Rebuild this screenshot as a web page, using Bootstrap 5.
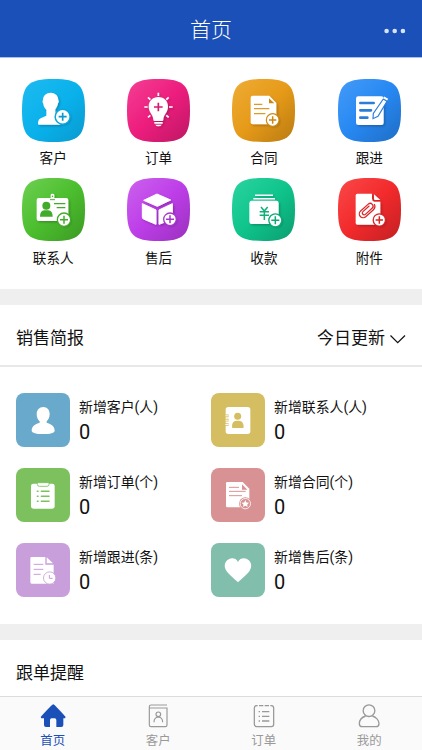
<!DOCTYPE html>
<html lang="zh-CN">
<head>
<meta charset="utf-8">
<meta name="viewport" content="width=device-width, initial-scale=1">
<title>首页</title>
<link rel="stylesheet" href="https://cdn.jsdelivr.net/npm/bootstrap@5.3.0/dist/css/bootstrap.min.css">
<style>
body{font-family:Roboto,"Noto Sans CJK SC",sans-serif;color:#111;background:#fff;height:750px;overflow:hidden}
svg{display:block;flex:none}
.topbar{height:57px;background:#1b50b8;box-shadow:0 1px 0 #a9bfe8;padding:3px 16px 0}
.topbar-title{font-size:21px;line-height:30px;font-weight:300}
.topbar-more{margin-top:1px}
.apps{height:232px;padding:21.5px 0 0 .5px}
.app-entry{height:99.5px}
.tile{width:63px;height:63px}
.app-label{font-size:13.6px;line-height:20px;margin-top:6.5px}
.band{height:16px;background:#efefef}
.section-head{height:62px;padding:8px 16px 0;border-bottom:2px solid #e8e8e8;font-size:17px}
.stats{height:257px;padding:26px 0 0 16px}
.stat{height:75px;width:195px;gap:9px}
.stat-icon{width:54px;height:54px;border-radius:8px}
.stat-name{font-size:13.9px;line-height:20px;padding-top:4px}
.stat-value{font-size:20px;line-height:24px;padding-top:3px}
.reminder{height:56px;padding:11px 16px 0;font-size:17px;line-height:45px}
.tabs{height:54px;background:#fafafa;border-top:1px solid #dcdcdc;color:#9b9b9b}
.tabs a{font-size:12.4px;line-height:18px;color:#999}
.tabs a.active{color:#1b50b8}
.tabs svg{width:30px;height:26px;margin:6px 0 3px}
</style>
<script src="https://cdn.jsdelivr.net/npm/bootstrap@5.3.0/dist/js/bootstrap.bundle.min.js"></script>
</head>
<body class="d-flex flex-column">
<svg width="0" height="0" class="position-absolute" aria-hidden="true">
<defs>
<path id="sq" d="M94.500 0C171 0 189 18 189 94.500C189 171 171 189 94.500 189C18 189 0 171 0 94.500C0 18 18 0 94.500 0Z"/>
<linearGradient id="g1" x2="1" y2="1"><stop offset="0" stop-color="#1dbbf1"/><stop offset=".55" stop-color="#09b0ea"/><stop offset="1" stop-color="#0999cf"/></linearGradient>
<linearGradient id="g2" x2="1" y2="1"><stop offset="0" stop-color="#f43f94"/><stop offset=".5" stop-color="#ed1d7d"/><stop offset="1" stop-color="#bd1764"/></linearGradient>
<linearGradient id="g3" x2="1" y2="1"><stop offset="0" stop-color="#eeac36"/><stop offset=".5" stop-color="#e69a18"/><stop offset="1" stop-color="#b97b12"/></linearGradient>
<linearGradient id="g4" x2="1" y2="1"><stop offset="0" stop-color="#449bf8"/><stop offset=".5" stop-color="#2788f2"/><stop offset="1" stop-color="#1f6dc4"/></linearGradient>
<linearGradient id="g5" x2="1" y2="1"><stop offset="0" stop-color="#6ed052"/><stop offset=".5" stop-color="#4cbe2e"/><stop offset="1" stop-color="#3b9a24"/></linearGradient>
<linearGradient id="g6" x2="1" y2="1"><stop offset="0" stop-color="#cc62ee"/><stop offset=".5" stop-color="#bd3ee8"/><stop offset="1" stop-color="#9a30bd"/></linearGradient>
<linearGradient id="g7" x2="1" y2="1"><stop offset="0" stop-color="#2bd3a0"/><stop offset=".5" stop-color="#0fc48b"/><stop offset="1" stop-color="#0b9d70"/></linearGradient>
<linearGradient id="g8" x2="1" y2="1"><stop offset="0" stop-color="#fb4848"/><stop offset=".5" stop-color="#f22a2c"/><stop offset="1" stop-color="#c22023"/></linearGradient>
<filter id="sh" x="-20%" y="-20%" width="150%" height="150%"><feDropShadow dx="4" dy="4" stdDeviation="2.500" flood-color="#000" flood-opacity=".24"/></filter>
</defs>
</svg>

<header class="topbar d-flex align-items-center justify-content-center text-white position-relative flex-shrink-0">
  <div class="topbar-title">首页</div>
  <svg class="topbar-more position-absolute end-0 me-3" width="22" height="6" viewBox="0 0 22 6" fill="#d6e4fb"><circle cx="2.600" cy="3" r="2.300"/><circle cx="10.700" cy="3" r="2.300"/><circle cx="18.900" cy="3" r="2.300"/></svg>
</header>

<section class="apps row g-0 align-content-start flex-shrink-0">
  <div class="app-entry col-3 d-flex flex-column align-items-center">
    <svg class="tile" viewBox="35 25 189 189"><use href="#sq" x="35" y="25" fill="url(#g1)"/>
      <g filter="url(#sh)"><path fill="#fff" d="M121 66C134 66 144 75 144 88C146 91 146 95 143 98C142 106 138 112 135 116V125L150 133V162H85Q82 161 83 157C84 149 86 145 91 143L108 135V117C103 112 99 106 99 99C96 96 96 91 98 88C98 75 108 66 121 66Z"/><circle cx="157" cy="138" r="21" fill="#fff"/></g>
      <circle cx="157" cy="138" r="22.500" fill="#fff" stroke="#09a6df" stroke-width="4.500"/><path d="M145 138H169M157 126V150" stroke="#0999d0" stroke-width="5"/></svg>
    <div class="app-label">客户</div>
  </div>
  <div class="app-entry col-3 d-flex flex-column align-items-center">
    <svg class="tile" viewBox="351 25 189 189"><use href="#sq" x="351" y="25" fill="url(#g2)"/>
      <g filter="url(#sh)" fill="#fff"><path d="M445 79C462 79 474 91 474 107C474 127 461 130 460 147Q460 151 456 151H434Q430 151 430 147C429 130 416 127 416 107C416 91 428 79 445 79Z"/><path d="M433 154H458V159H433ZM436 162H455Q453 167 445 167Q438 167 436 162Z"/><path d="M445 66V76M403 109H413M477 109H488M414 80L421 87M476 80L469 87M414 140L421 134M476 140L469 134" stroke="#fff" stroke-width="5"/></g>
      <path d="M432 109H458M445 96V122" stroke="#d51b70" stroke-width="5"/></svg>
    <div class="app-label">订单</div>
  </div>
  <div class="app-entry col-3 d-flex flex-column align-items-center">
    <svg class="tile" viewBox="62 25 189 189"><use href="#sq" x="62" y="25" fill="url(#g3)"/>
      <g filter="url(#sh)" fill="#fff"><path d="M124 75H174L195 97V161H124Q118 161 118 155V81Q118 75 124 75Z"/><circle cx="184" cy="148" r="18"/></g>
      <path d="M173 83V98H189Z" fill="#ca8816"/><path d="M128 101H153M128 114H174M128 129H162" stroke="#de9a24" stroke-width="4"/>
      <circle cx="184" cy="148" r="19" fill="#fff" stroke="#cf8b16" stroke-width="3.500"/><path d="M173 148H195M184 137V159" stroke="#cb8715" stroke-width="4.500"/></svg>
    <div class="app-label">合同</div>
  </div>
  <div class="app-entry col-3 d-flex flex-column align-items-center">
    <svg class="tile" viewBox="379 25 189 189"><use href="#sq" x="379" y="25" fill="url(#g4)"/>
      <g filter="url(#sh)"><rect x="433" y="77" width="83" height="86" rx="7" fill="#fff"/></g>
      <path d="M446 97H486M446 119H478M446 141H467" stroke="#2b7ed8" stroke-width="8" stroke-linecap="round"/>
      <path d="M515 85L526 92L499 137L484 144L485 128Z" fill="#fff" stroke="#287edb" stroke-width="3.500"/><path d="M516 80L528 87" stroke="#fff" stroke-width="6"/></svg>
    <div class="app-label">跟进</div>
  </div>
  <div class="app-entry col-3 d-flex flex-column align-items-center">
    <svg class="tile" viewBox="35 24 189 189"><use href="#sq" x="35" y="24" fill="url(#g5)"/>
      <g filter="url(#sh)"><rect x="79" y="84" width="95" height="69" rx="6" fill="#fff"/><path d="M121 88V75Q121 71 126 71Q132 71 132 75V88Z" fill="#fff"/><circle cx="161" cy="149" r="18" fill="#fff"/></g>
      <circle cx="126.500" cy="79" r="2.500" fill="#4aae30"/><path d="M119 89H134" stroke="#50b635" stroke-width="3"/><circle cx="108" cy="107" r="12" fill="#42ab2a"/><path d="M89 140Q89 122 102 121H114Q127 122 127 140Z" fill="#42ab2a"/><path d="M131 101H165M139 113H165" stroke="#42ab2a" stroke-width="4"/>
      <circle cx="161" cy="149" r="20" fill="#fff" stroke="#43aa2a" stroke-width="4"/><path d="M149 149H173M161 137V161" stroke="#43aa2a" stroke-width="4.500"/></svg>
    <div class="app-label">联系人</div>
  </div>
  <div class="app-entry col-3 d-flex flex-column align-items-center">
    <svg class="tile" viewBox="351 24 189 189"><use href="#sq" x="351" y="24" fill="url(#g6)"/>
      <g filter="url(#sh)" fill="#fff" stroke="#fff" stroke-width="3" stroke-linejoin="round"><path d="M441 72L482 90L442 109L401 91Z"/><path d="M397 101L438 120V163L400 147Q397 145 397 141Z"/><path d="M447 120L487 101V148L447 163Z"/><circle cx="480" cy="148" r="16"/></g>
      <circle cx="480" cy="148" r="19" fill="#fff" stroke="#a936cc" stroke-width="4"/><path d="M468 148H492M480 136V160" stroke="#a936cc" stroke-width="4.500"/></svg>
    <div class="app-label">售后</div>
  </div>
  <div class="app-entry col-3 d-flex flex-column align-items-center">
    <svg class="tile" viewBox="62 24 189 189"><use href="#sq" x="62" y="24" fill="url(#g7)"/>
      <g filter="url(#sh)" fill="#fff"><path d="M131 76H185M126 86H191" stroke="#fff" stroke-width="4.500"/><rect x="114" y="92" width="88" height="70" rx="7"/><circle cx="192" cy="151" r="18"/></g>
      <path d="M149 111L159 123L169 111M159 123V150M145 125H173M145 136H173" stroke="#0faf7c" stroke-width="4.500" fill="none"/>
      <circle cx="192" cy="151" r="19.500" fill="#fff" stroke="#0caa78" stroke-width="4"/><path d="M180 151H204M192 139V163" stroke="#0caa78" stroke-width="4.500"/></svg>
    <div class="app-label">收款</div>
  </div>
  <div class="app-entry col-3 d-flex flex-column align-items-center">
    <svg class="tile" viewBox="379 24 189 189"><use href="#sq" x="379" y="24" fill="url(#g8)"/>
      <g filter="url(#sh)" fill="#fff"><path d="M437 71H481V86Q481 94 488 95H506V164H437Q432 164 432 159V76Q432 71 437 71Z"/><path d="M487 73L506 90H491Q487 90 487 86Z"/><circle cx="503" cy="150" r="17"/></g>
      <g transform="rotate(-42 466 122)" fill="none" stroke="#db2729" stroke-width="3.800" stroke-linecap="round"><path d="M481 133H451A11.500 11.500 0 0 1 451 110H482A8.500 8.500 0 0 1 482 127H455A5.500 5.500 0 0 1 455 116H480M481 133Q493 132 495 123"/></g>
      <circle cx="503" cy="150" r="18.500" fill="#fff" stroke="#d72528" stroke-width="4"/><path d="M492 150H514M503 139V161" stroke="#d72528" stroke-width="4.500"/></svg>
    <div class="app-label">附件</div>
  </div>
</section>

<div class="band flex-shrink-0"></div>

<section class="flex-shrink-0">
  <div class="section-head d-flex align-items-center justify-content-between">
    <span>销售简报</span>
    <span class="d-flex align-items-center">今日更新<svg class="ms-1" width="17" height="12" viewBox="0 0 17 12" fill="none" stroke="#111" stroke-width="1.200"><path d="M1.500 2.500L8.700 9.700L16 2.500"/></svg></span>
  </div>
  <div class="stats d-flex flex-wrap align-content-start">
    <div class="stat d-flex">
      <svg class="stat-icon" viewBox="48 24 162 162"><rect x="48" y="24" width="162" height="162" fill="#69a9cb"/><path fill="#fff" d="M130 66C142 66 149 75 149 87C149 97 145 104 140 109V113C151 116 164 122 164 137C164 144 150 147 130 147S95 144 95 137C95 122 108 116 119 113V109C113 104 110 97 110 87C110 75 118 66 130 66Z"/></svg>
      <div><div class="stat-name">新增客户(人)</div><div class="stat-value">0</div></div>
    </div>
    <div class="stat d-flex">
      <svg class="stat-icon" viewBox="34 24 162 162"><rect x="34" y="24" width="162" height="162" fill="#d5be61"/><rect x="78" y="66" width="74" height="81" rx="8" fill="#fff"/><path d="M74 92.500H87M74 105.500H87M74 118.500H87" stroke="#d5be61" stroke-width="8"/><path d="M77 92.500H87M77 105.500H87M77 118.500H87" stroke="#fff" stroke-width="3"/><circle cx="114" cy="94" r="10.500" fill="#d5be61"/><path d="M97 126Q97 107 110 107H118Q132 108 132 126Q132 129 129 129H100Q97 129 97 126Z" fill="#d5be61"/></svg>
      <div><div class="stat-name">新增联系人(人)</div><div class="stat-value">0</div></div>
    </div>
    <div class="stat d-flex">
      <svg class="stat-icon" viewBox="48 250 162 162"><rect x="48" y="250" width="162" height="162" fill="#7dc15f"/><rect x="93" y="297" width="71" height="75" rx="7" fill="#fff"/><path d="M112 294H147V299Q147 305 141 305H118Q112 305 112 299Z" fill="#fff" stroke="#7dc15f" stroke-width="2.500"/><path d="M124 320H147M124 335H147M124 350H147M112 320H114M112 335H114M112 350H114" stroke="#7dc15f" stroke-width="4.500" stroke-linecap="round"/></svg>
      <div><div class="stat-name">新增订单(个)</div><div class="stat-value">0</div></div>
    </div>
    <div class="stat d-flex">
      <svg class="stat-icon" viewBox="34 250 162 162"><rect x="34" y="250" width="162" height="162" fill="#d99293"/><path fill="#fff" d="M83 292H129L149 312V368H83Q79 368 79 364V296Q79 292 83 292Z"/><path d="M127 299V315H143Z" fill="#d99293"/><path d="M88 308H118M88 320H138M88 333H127" stroke="#d99293" stroke-width="3"/><circle cx="137" cy="357" r="19" fill="#d99293"/><circle cx="137" cy="357" r="15.500" fill="#d99293" stroke="#fff" stroke-width="2.500"/><path fill="#fff" d="M137 346L140.300 353.500L148 354.500L142.500 360L144 367L137 363.500L130 367L131.500 360L126 354.500L133.700 353.500Z"/></svg>
      <div><div class="stat-name">新增合同(个)</div><div class="stat-value">0</div></div>
    </div>
    <div class="stat d-flex">
      <svg class="stat-icon" viewBox="48 40 162 162"><rect x="48" y="40" width="162" height="162" fill="#c89edb"/><path fill="#fff" d="M95 82H136V105H161V162H95Q91 162 91 158V86Q91 82 95 82ZM140 83L159 101H140Z"/><path d="M101 104H130M101 119H130M101 134H122" stroke="#c89edb" stroke-width="3"/><circle cx="149" cy="145" r="18.500" fill="#fff" stroke="#c89edb" stroke-width="2.500"/><path d="M148 136V146H158" stroke="#c89edb" stroke-width="3" fill="none"/></svg>
      <div><div class="stat-name">新增跟进(条)</div><div class="stat-value">0</div></div>
    </div>
    <div class="stat d-flex">
      <svg class="stat-icon" viewBox="633 40 162 162"><rect x="633" y="40" width="162" height="162" fill="#81bfac"/><path fill="#fff" d="M714 97C720 84 734 84 742 89C755 97 757 111 749 123C741 135 724 148 714 158C704 148 687 135 679 123C671 111 673 97 686 89C694 84 708 84 714 97Z"/></svg>
      <div><div class="stat-name">新增售后(条)</div><div class="stat-value">0</div></div>
    </div>
  </div>
</section>

<div class="band flex-shrink-0"></div>
<section class="reminder flex-shrink-0">跟单提醒</section>

<nav class="tabs d-flex flex-shrink-0">
  <a class="active col-3 d-flex flex-column align-items-center text-decoration-none" href="#"><svg viewBox="114 190 90 78"><path fill="#1b50b8" d="M160 194Q163 194 197 232L195 236H190V256Q190 262 184 262H169V241Q169 236 164 236H155Q150 236 150 241V262H138Q132 262 132 256V236H124L122 232Q156 194 160 194Z"/></svg>首页</a>
  <a class="col-3 d-flex flex-column align-items-center text-decoration-none" href="#"><svg viewBox="430 190 90 78" fill="none" stroke="#999" stroke-width="3.500"><path d="M502 196H454Q449 196 449 201V256Q449 261 454 261H497Q502 261 502 256V205H450"/><circle cx="476" cy="224" r="7"/><path d="M463 248Q463 233 476 232Q489 233 489 248"/></svg>客户</a>
  <a class="col-3 d-flex flex-column align-items-center text-decoration-none" href="#"><svg viewBox="747 190 90 78" fill="none" stroke="#999" stroke-width="3.800"><path d="M773 198H770Q763 198 763 205V254Q763 261 770 261H814Q821 261 821 254V205Q821 198 814 198H811M777 198H790M794 198H807M786 216H808M786 230H808M786 244H808M776 216H780M776 230H780M776 244H780"/></svg>订单</a>
  <a class="col-3 d-flex flex-column align-items-center text-decoration-none" href="#"><svg viewBox="1063 190 90 78" fill="none" stroke="#999" stroke-width="4"><circle cx="1108" cy="213" r="17.500"/><path d="M1098 229C1086 233 1079 243 1079 252Q1079 261 1088 261H1129Q1138 261 1138 252C1138 243 1130 233 1118 229"/></svg>我的</a>
</nav>
</body>
</html>
